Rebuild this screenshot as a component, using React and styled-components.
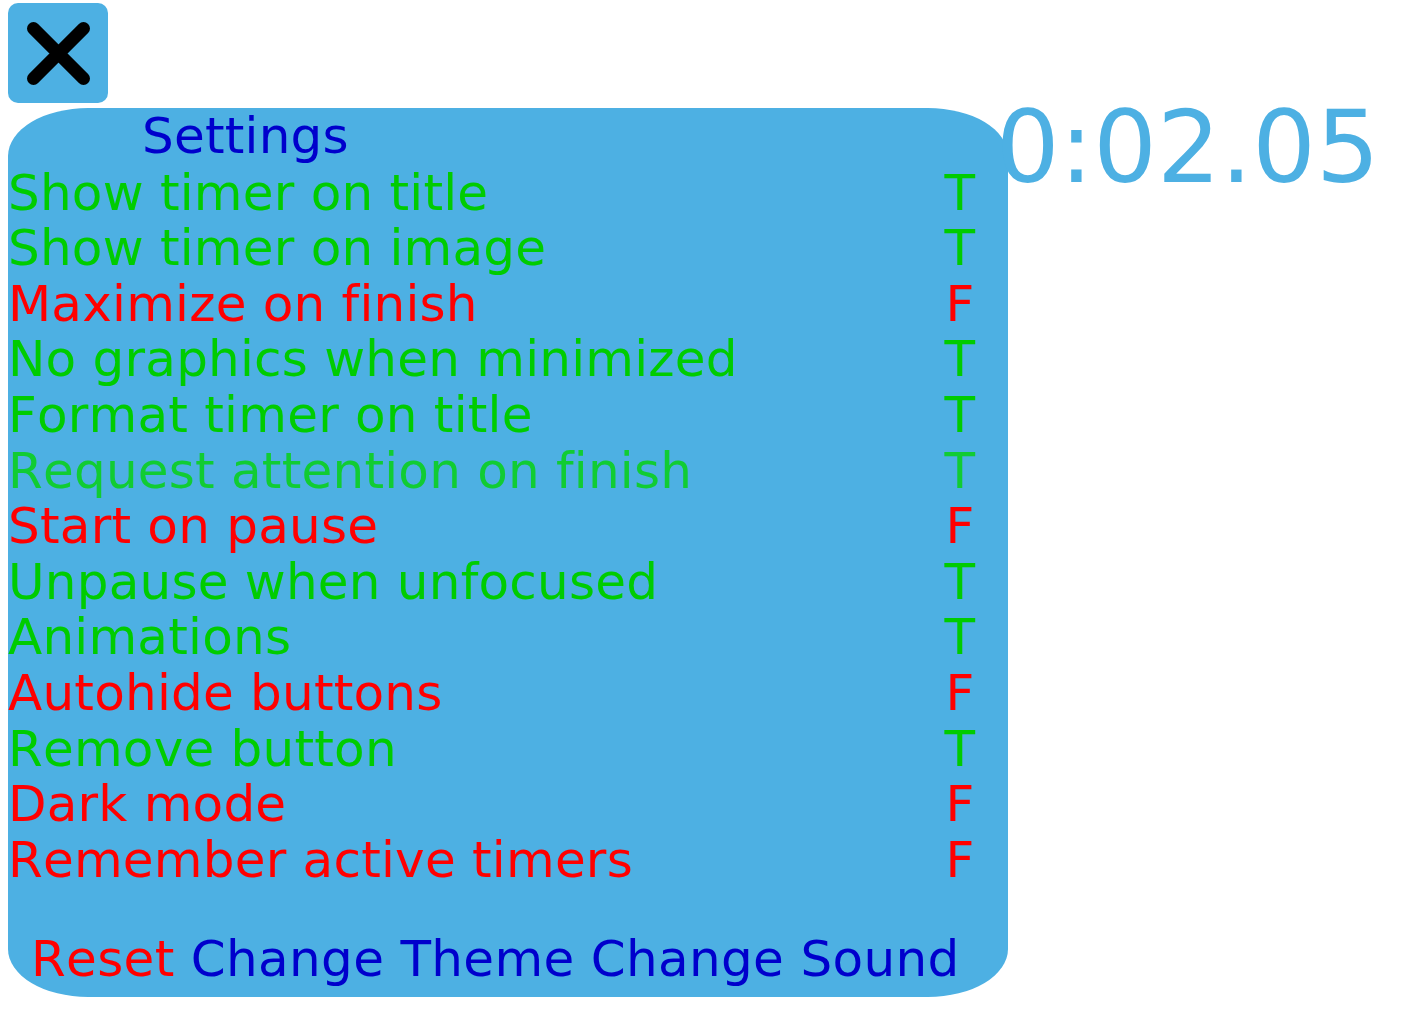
import React from 'react'
import styled, { createGlobalStyle } from 'styled-components'

const GlobalStyle = createGlobalStyle`
    body {
        margin: 0;
        background: #ffffff;
        font-family: 'DejaVu Sans', 'Liberation Sans', sans-serif;
        font-kerning: none;
        font-variant-ligatures: none;
        font-feature-settings: "liga" 0, "clig" 0, "kern" 0;
    }
`

const SKY = 'rgb(77, 176, 227)'

const Page = styled.div`
    padding: 3px 8px;
    display: flex;
    flex-direction: column;
    align-items: flex-start;
`

const CloseButton = styled.div`
    width: 100px;
    height: 100px;
    background: ${SKY};
    border-radius: 10px;
    display: flex;
    cursor: pointer;
`

const Main = styled.div`
    margin-top: 5px;
    display: flex;
    align-items: flex-start;
`

const Panel = styled.div`
    width: 1000px;
    height: 889px;
    background: ${SKY};
    border-radius: 80px / 48px;
    font-size: 50px;
    line-height: 55.6px;
    letter-spacing: 0.22px;
    display: flex;
    flex-direction: column;
    box-sizing: border-box;
    padding-top: 1px;
`

const Title = styled.div`
    color: #0000cc;
    padding-left: 134px;
    margin-bottom: 1px;
`

const Row = styled.div`
    display: grid;
    grid-template-columns: 1fr 96px;
    color: ${props => props.tint};
    white-space: nowrap;
`

const Value = styled.span`
    text-align: center;
`

const Footer = styled.div`
    margin-top: 44px;
    padding-left: 23px;
    letter-spacing: 0.33px;
    white-space: nowrap;
`

const Action = styled.span`
    color: ${props => props.danger ? '#ff0000' : '#0000cc'};
    cursor: pointer;
`

const Timer = styled.div`
    position: relative;
    z-index: 1;
    margin-left: -12px;
    margin-top: -10px;
    font-size: 100px;
    line-height: 1;
    color: ${SKY};
`

const settings = [
    ['Show timer on title', true],
    ['Show timer on image', true],
    ['Maximize on finish', false],
    ['No graphics when minimized', true],
    ['Format timer on title', true],
    ['Request attention on finish', true, '#11cc33'],
    ['Start on pause', false],
    ['Unpause when unfocused', true],
    ['Animations', true],
    ['Autohide buttons', false],
    ['Remove button', true],
    ['Dark mode', false],
    ['Remember active timers', false],
]

export default function App() {
    return (
        <Page>
            <GlobalStyle />
            <CloseButton>
                <svg width="100" height="100" viewBox="0 0 100 100">
                    <path d="M25.5 25.5 L75.5 75.5 M75.5 25.5 L25.5 75.5" stroke="#000" strokeWidth="13" strokeLinecap="round" fill="none" />
                </svg>
            </CloseButton>
            <Main>
                <Panel>
                    <Title>Settings</Title>
                    {settings.map(([name, on, tint]) => (
                        <Row key={name} tint={tint || (on ? '#00cc00' : '#ff0000')}>
                            <span>{name}</span>
                            <Value>{on ? 'T' : 'F'}</Value>
                        </Row>
                    ))}
                    <Footer>
                        <Action danger>Reset</Action> <Action>Change Theme</Action> <Action>Change Sound</Action>
                    </Footer>
                </Panel>
                <Timer>0:02.05</Timer>
            </Main>
        </Page>
    )
}
